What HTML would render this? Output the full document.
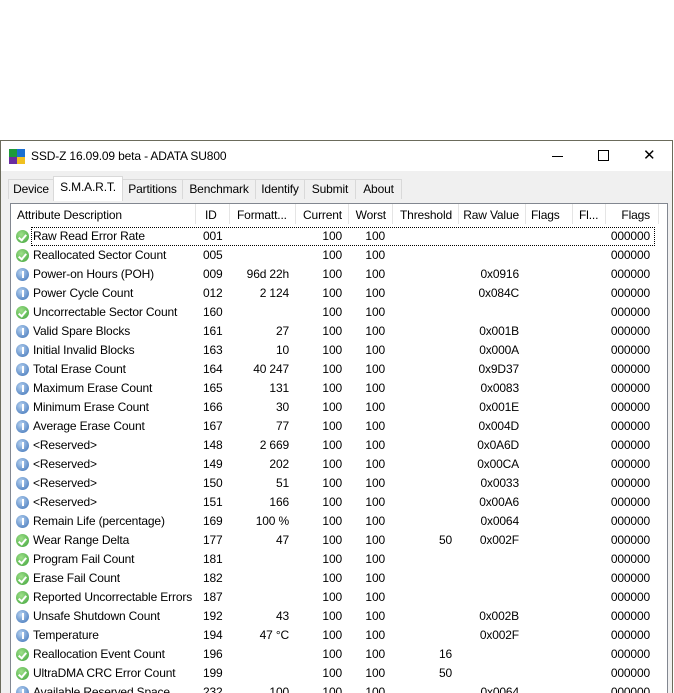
<!DOCTYPE html><html><head><style>
html,body{margin:0;width:674px;height:693px;overflow:hidden}
body{background:#fff;position:relative;font-family:"Liberation Sans",sans-serif;font-size:12px;color:#000;letter-spacing:-0.15px}
.win{position:absolute;left:0;top:140px;width:671px;height:560px;border:1px solid #6b6b5b;background:#f0f0f0}
.title{position:absolute;left:0;top:0;width:671px;height:30px;background:#fff}
.tab{position:absolute;top:1px;height:19px;border:1px solid #d9d9d9;border-bottom:none;line-height:19px;text-align:center;background:#f0f0f0}
.list{position:absolute;left:9px;top:62px;width:656px;height:520px;border:1px solid #828790;background:#fff}
.h{position:absolute;top:205px;height:20px;line-height:20px}
.sep{position:absolute;top:204px;width:1px;height:20px;background:#e5e5e5}
.r{position:absolute;height:19px;line-height:19px}
.ic{position:absolute;width:13px;height:13px;border-radius:50%}
.g{background:radial-gradient(circle at 40% 35%,#9ee08a,#3fa33a)}
.b{background:radial-gradient(circle at 40% 35%,#b7d3f2,#3a6fb5)}
.g:after{content:"";position:absolute;left:3.5px;top:2.5px;width:3px;height:6px;border:solid #fff;border-width:0 2px 2px 0;transform:rotate(40deg)}
.b:after{content:"";position:absolute;left:5.5px;top:3px;width:2px;height:7px;background:#fff}
</style></head><body>
<div class="win">
<div class="title">
<div style="position:absolute;left:8px;top:8px;width:8px;height:8px;background:#1e9a3a"></div>
<div style="position:absolute;left:16px;top:8px;width:8px;height:8px;background:#1a6fd0"></div>
<div style="position:absolute;left:8px;top:16px;width:8px;height:7px;background:#6a2da0"></div>
<div style="position:absolute;left:16px;top:16px;width:8px;height:7px;background:#f0c020"></div>
<div style="position:absolute;left:30px;top:8px;font-size:12px">SSD-Z 16.09.09 beta - ADATA SU800</div>
<div style="position:absolute;left:551px;top:15px;width:11px;height:1px;background:#000"></div>
<div style="position:absolute;left:597px;top:9px;width:9px;height:9px;border:1px solid #000"></div>
<div style="position:absolute;left:642px;top:8px;font-size:15px;line-height:13px">✕</div>
</div>
<div class="tab" style="left:7px;width:44px;top:38px">Device</div>
<div class="tab" style="left:52px;width:68px;top:35px;height:24px;line-height:20px;background:#fff;z-index:2">S.M.A.R.T.</div>
<div class="tab" style="left:121px;width:59px;top:38px">Partitions</div>
<div class="tab" style="left:181px;width:72px;top:38px">Benchmark</div>
<div class="tab" style="left:254px;width:48px;top:38px">Identify</div>
<div class="tab" style="left:303px;width:50px;top:38px">Submit</div>
<div class="tab" style="left:354px;width:45px;top:38px">About</div>
<div class="list"></div>
</div>
<div id="c"></div>
<script>
var H=[["Attribute Description",17,"l"],["ID",205,"l"],["Formatt...",237,"l"],["Current",342,"r"],["Worst",386,"r"],["Threshold",452,"r"],["Raw Value",519,"r"],["Flags",531,"l"],["Fl...",579,"l"],["Flags",650,"r"]];
var S=[195,229,295,348,392,458,525,572,605,658];
var D=[["g","Raw Read Error Rate","001","","",""],["g","Reallocated Sector Count","005","","",""],["b","Power-on Hours (POH)","009","96d 22h","","0x0916"],["b","Power Cycle Count","012","2 124","","0x084C"],["g","Uncorrectable Sector Count","160","","",""],["b","Valid Spare Blocks","161","27","","0x001B"],["b","Initial Invalid Blocks","163","10","","0x000A"],["b","Total Erase Count","164","40 247","","0x9D37"],["b","Maximum Erase Count","165","131","","0x0083"],["b","Minimum Erase Count","166","30","","0x001E"],["b","Average Erase Count","167","77","","0x004D"],["b","&lt;Reserved&gt;","148","2 669","","0x0A6D"],["b","&lt;Reserved&gt;","149","202","","0x00CA"],["b","&lt;Reserved&gt;","150","51","","0x0033"],["b","&lt;Reserved&gt;","151","166","","0x00A6"],["b","Remain Life (percentage)","169","100 %","","0x0064"],["g","Wear Range Delta","177","47","50","0x002F"],["g","Program Fail Count","181","","",""],["g","Erase Fail Count","182","","",""],["g","Reported Uncorrectable Errors","187","","",""],["b","Unsafe Shutdown Count","192","43","","0x002B"],["b","Temperature","194","47 °C","","0x002F"],["g","Reallocation Event Count","196","","16",""],["g","UltraDMA CRC Error Count","199","","50",""],["b","Available Reserved Space","232","100","","0x0064"]];
var o="";
H.forEach(function(h){o+=h[2]=="l"?'<div class="h" style="left:'+h[1]+'px">'+h[0]+'</div>':'<div class="h" style="right:'+(674-h[1])+'px">'+h[0]+'</div>'});
S.forEach(function(s){o+='<div class="sep" style="left:'+s+'px"></div>'});
D.forEach(function(d,i){var y=227+19*i;
o+='<div class="ic '+d[0]+'" style="left:16px;top:'+(y+3)+'px"></div>';
o+='<div class="r" style="left:33px;top:'+y+'px">'+d[1]+'</div>';
o+='<div class="r" style="left:203px;top:'+y+'px">'+d[2]+'</div>';
o+='<div class="r" style="right:385px;top:'+y+'px">'+d[3]+'</div>';
o+='<div class="r" style="right:332px;top:'+y+'px">100</div>';
o+='<div class="r" style="right:289px;top:'+y+'px">100</div>';
o+='<div class="r" style="right:222px;top:'+y+'px">'+d[4]+'</div>';
o+='<div class="r" style="right:155px;top:'+y+'px">'+d[5]+'</div>';
o+='<div class="r" style="right:24px;top:'+y+'px">000000</div>';});
o+='<div style="position:absolute;left:31px;top:227px;width:622px;height:17px;border:1px dotted #000"></div>';
document.getElementById("c").innerHTML=o;
</script>
</body></html>
